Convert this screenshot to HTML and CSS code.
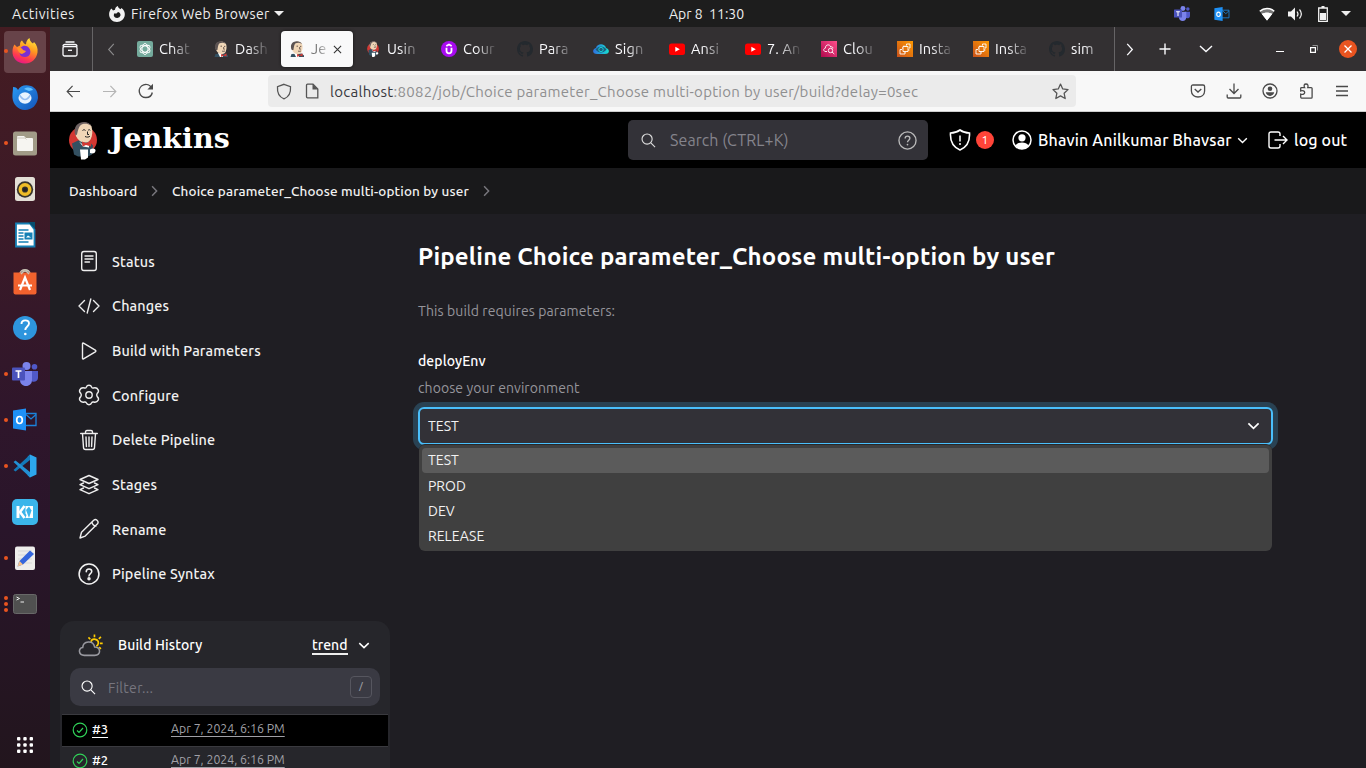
FILE: index.html
```html
<!DOCTYPE html>
<html lang="en">
<head>
<meta charset="utf-8">
<title>Jenkins</title>
<link rel="stylesheet" href="styles.css">
</head>
<body>
<svg class="defs" aria-hidden="true">
  <defs>
    <linearGradient id="ffg" x1=".7" y1="0" x2=".3" y2="1"><stop offset="0" stop-color="#ffe63c"/><stop offset=".4" stop-color="#ff9a1f"/><stop offset=".75" stop-color="#ff3b4e"/><stop offset="1" stop-color="#e4168b"/></linearGradient>
    <linearGradient id="tbg" x1="0" y1="0" x2="1" y2="1"><stop offset="0" stop-color="#2a9af3"/><stop offset="1" stop-color="#1453b8"/></linearGradient>
    <linearGradient id="awsg" x1="0" y1="1" x2="1" y2="0"><stop offset="0" stop-color="#c8511b"/><stop offset="1" stop-color="#f90"/></linearGradient>
    <linearGradient id="cwg" x1="0" y1="1" x2="1" y2="0"><stop offset="0" stop-color="#b0084d"/><stop offset="1" stop-color="#ff4f8b"/></linearGradient>
    <linearGradient id="eyeg"><stop offset="0" stop-color="#2f6fe0"/><stop offset="1" stop-color="#16e0d0"/></linearGradient>
  </defs>
  <symbol id="head" viewBox="0 0 16 16"><path d="M1.500 16l1-3 10-.5 2.500 2V16z" fill="#335061"/><path d="M5 12l3-1 2 5H7z" fill="#fff"/><path d="M3.500 2.500C6-.3 11.500-.3 13 3c.8 2 .8 5-.2 7.500-1 2.800-5 3.300-7 1.800C4 11 3 9 2.500 7z" fill="#f0d6b7"/><path d="M2.800 9C1.200 6 1.800 2.500 4.600 1 8-.6 11.500.3 13 3c-2.400-1.700-4.600-1.500-6.400-.8C5.200 3.500 5 5.500 4.400 9z" fill="#5c5353"/><path d="M7.500 5.200H9M11 5.400h1.300M9 10c1 .5 2.200.4 3-.1M10.700 6v2.200h1" stroke="#4b3a36" stroke-width=".8" fill="none"/><path d="M8 13l2.600 1 2.900-1.700v3.300L10.600 14.500 8.200 16z" fill="#d33833"/></symbol>
  <symbol id="butler" viewBox="0 0 28 38"><ellipse cx="14" cy="18.500" rx="14" ry="13.500" fill="#d33833"/><path d="M5 33L3 22l6-3 10 0 5 5-1 9-4 2H9z" fill="#335061"/><path d="M10 20l5 4 5-4v6l-6-1z" fill="#fff"/><path d="M7 6C10 .5 20-.5 22.500 5c1.500 5 .8 9-.7 12.500-2 4.500-8 4.500-11.500 1.500C7.500 16.500 6 13 6 10z" fill="#f0d6b7"/><path d="M6.500 14C4.500 9 6 3.500 10.500 1.500 15-.5 20 .3 22.300 4.500c-4-3-8-2.500-10.500-1C9.500 5.500 9 9 8 13z" fill="#6e6262"/><path d="M13.500 9c1-1 2-1 3 0M19 9c.8-1 1.600-1 2.300-.2M16 15c2 1 4 .7 5-.4M18.500 10v3h1.500" stroke="#222" fill="none"/><path d="M13 20l4 1.500 5-2v5.500L17 23.500 13.500 25z" fill="#d33833"/><path d="M11 28h8v8l-3 2h-4z" fill="#fff"/><path d="M21 28c3-2 6-1 5.500 1.500s-3 3-5.500 2z" fill="#fff"/></symbol>
  <symbol id="yt" viewBox="0 0 16 16"><rect y="2.500" width="16" height="11.500" rx="2.500" fill="red"/><path d="M6.300 5.800l4.500 2.500-4.500 2.500z" fill="#fff"/></symbol>
  <symbol id="gh" viewBox="0 0 16 16"><path fill="#24292e" d="M8 0C3.580 0 0 3.580 0 8c0 3.540 2.290 6.530 5.470 7.590.4.070.55-.17.55-.38 0-.19-.01-.82-.01-1.490-2.010.37-2.530-.49-2.690-.94-.09-.23-.48-.94-.82-1.130-.28-.15-.68-.52-.01-.53.63-.01 1.080.58 1.230.82.72 1.210 1.870.87 2.330.66.07-.52.28-.87.51-1.070-1.780-.2-3.640-.89-3.640-3.950 0-.87.31-1.590.82-2.150-.08-.2-.36-1.020.08-2.120 0 0 .67-.21 2.200.82.64-.18 1.320-.27 2-.27s1.360.09 2 .27c1.530-1.040 2.200-.82 2.200-.82.44 1.100.16 1.920.08 2.120.51.56.82 1.270.82 2.150 0 3.070-1.870 3.750-3.650 3.950.29.25.54.73.54 1.480 0 1.070-.01 1.930-.01 2.200 0 .21.15.46.55.38A8.010 8.010 0 0016 8c0-4.420-3.580-8-8-8z"/></symbol>
  <symbol id="aws" viewBox="0 0 16 16"><path fill="url(#awsg)" d="M0 0h16v16H0z"/><path fill="none" stroke="#fff" stroke-width=".9" d="M6 5.500h5v5H6zM5 8.500H3v4.500h5v-1.500M9.500 4.500V3H13v4h-1M7 4.500v1M9 4.500v1M11 9h1.500M5 7h1M8 10.500V12"/></symbol>
  <symbol id="teams" viewBox="0 0 26 24"><circle cx="14.500" cy="4" r="4" fill="#7b83eb"/><circle cx="22.500" cy="4.700" r="2.800" fill="#5059c9"/><path d="M18 9h8v7c0 3.500-5 5-7 2.500z" fill="#5059c9"/><path d="M8 9h12v9c0 3.500-2.500 6-6 6s-6-2.500-6-6z" fill="#7b83eb"/><rect y="5.500" width="13" height="13" rx="1" fill="#4b53bc"/><path d="M3.500 9h6M6.500 9v7" stroke="#fff" stroke-width="1.700"/></symbol>
  <symbol id="outlook" viewBox="0 0 24 22"><path d="M12 5h11v12H12" fill="none" stroke="#1b83dc" stroke-width="1.300"/><path d="M13 6l5 4.500L23 6" fill="none" stroke="#1b83dc" stroke-width="1.300"/><path d="M0 2l13-2v22L0 20z" fill="#1e90f5"/><ellipse cx="6.500" cy="11.500" rx="2.800" ry="3.500" fill="none" stroke="#fff" stroke-width="1.700"/></symbol>
  <symbol id="help" viewBox="0 0 20 20"><g fill="none" stroke="currentColor" stroke-width="1.400"><circle cx="10" cy="10" r="9"/><path d="M7.500 8c0-3.600 5-3.300 5-.3 0 1.900-2.500 2-2.500 4.100"/></g><circle cx="10" cy="14.300" r=".9" fill="currentColor"/></symbol>
  <symbol id="mag" viewBox="0 0 16 16"><g fill="none" stroke="currentColor" stroke-width="1.200"><circle cx="6.500" cy="6.500" r="5.400"/><path d="M10.500 10.500L15 15"/></g></symbol>
  <symbol id="down" viewBox="0 0 14 8"><path d="M1.500 1.200L7 6.500l5.500-5.300" fill="none" stroke="currentColor" stroke-width="1.800"/></symbol>
  <symbol id="right" viewBox="0 0 8 14"><path d="M1.200 1.500L6.500 7l-5.300 5.500" fill="none" stroke="currentColor" stroke-width="1.700"/></symbol>
  <symbol id="ok" viewBox="0 0 16 16"><g fill="none" stroke="#30d158" stroke-width="1.200"><circle cx="8" cy="8" r="6.800"/><path d="M5 8.500l2 2 4-4.500"/></g></symbol>
</svg>

<header class="panel">
  <span class="activities">Activities</span>
  <svg class="app-ff" viewBox="0 0 16 16"><path d="M2.500 2.500L4 4.500 6 3.800c0-2 1.500-3.300 3-3.800-.2 1.500 1 2.200 2.500 3.200l1-1.200C15 4 16 6 15.800 9c-.4 4-3.800 7-7.800 7-4.500 0-8-3.500-7.900-8 0-2 1-4.500 2.400-5.500z" fill="#f2f2f2"/><path d="M5 7.500h2.500L9 6c2 .5 2.800 2 2.500 3.500A3.600 3.600 0 014.800 10z" fill="#1d1d1d"/></svg>
  <span class="app-name">Firefox Web Browser</span><i class="tri"></i>
  <span class="clock">Apr 8&nbsp; 11:30</span>
  <div class="tray">
    <svg class="t-teams"><use href="#teams"/></svg>
    <svg class="t-out"><use href="#outlook"/></svg>
    <svg class="t-wifi" viewBox="0 0 16 14"><path d="M8 13.500L.5 4C4.500.2 11.500.2 15.500 4z" fill="#777"/><path d="M8 13.500L3 7c3-2 7-2 10 0z" fill="#fff"/><path d="M2.500 6.500h11L8 13.500z" fill="#fff"/><path d="M.8 4.200C4.800.6 11.200.6 15.200 4.200" fill="none" stroke="#fff" stroke-width="1.500"/></svg>
    <svg class="t-vol" viewBox="0 0 16 14"><path d="M0 4.500h3L7 .5v13l-4-4H0z" fill="#f2f2f2"/><path d="M9 4.500c1.200 1.500 1.200 3.500 0 5M11.500 2.500c2.300 2.800 2.300 6.200 0 9" fill="none" stroke="#f2f2f2" stroke-width="1.200"/></svg>
    <svg class="t-bat" viewBox="0 0 10 16"><path d="M3.500 0h3v2h-3z" fill="#f2f2f2"/><path d="M.7 2h8.600v13.300H.7z" fill="none" stroke="#f2f2f2" stroke-width="1.300"/><path d="M2 7h6v7H2z" fill="#f2f2f2"/></svg>
    <i class="tri"></i>
  </div>
</header>

<div class="desktop">
<aside class="dock">
  <div class="app on"><i class="dots d1"></i><svg viewBox="0 0 26 26"><path d="M2.500 6.500L5 9l3-1.500c-.2-3 1-4.500 2-5l2 3 2 1C14 4 15 1.500 17.500 0c.3 3 1.500 4 3.500 5.500L22 4c3 3 4 6.500 3.500 10.500C24.500 21 19.500 25.500 13 25.500 5.500 25.500 0 20 .5 13 .6 10 1.500 8 2.500 6.500z" fill="url(#ffg)"/><path d="M8 12c0-4 6-6 9-2s1 9-4 9-6-3-5-7z" fill="#7a2fd0"/><path d="M5 10c3-1 5 0 6 2l3 1c-1 2-3 2-4 3-2 0-4-3-5-6z" fill="#ff9328"/></svg></div>
  <div class="app"><svg viewBox="0 0 26 26"><path d="M1 3c3 0 4 1 5 3 2-4 7-6 13-4 5 2 7 6 7 12-1 7-6 12-13 12C6 26 1 20 .5 14 .3 9 1 7 1 3z" fill="url(#tbg)"/><path d="M12 5c4-3 8-1 9 1l-4 1z" fill="#65c3ff"/><ellipse cx="13" cy="14" rx="6.500" ry="5.800" fill="#e9f3ff"/><path d="M7.500 11c2.500 4 4 4.500 5.500 4.500s3-.5 5.500-4.500" fill="none" stroke="#97bdf0" stroke-width="1.500"/></svg></div>
  <div class="app"><i class="dots d1"></i><svg viewBox="0 0 26 26"><rect x="1" y="1.500" width="24" height="24" rx="2.500" fill="#a19b87"/><path d="M5 7q0-1 1-1h6l2 2h6q1 0 1 1v11q0 1-1 1H6q-1 0-1-1z" fill="#f6f5f1"/><path d="M5 8h8l1.500 1.500" fill="none" stroke="#d0ccc0"/></svg></div>
  <div class="app"><svg viewBox="0 0 26 26"><rect x="3" y="1" width="20" height="24" rx="2.500" fill="#e3dfd6"/><circle cx="13" cy="13.500" r="8.200" fill="#38352c"/><circle cx="13" cy="13.500" r="4.800" fill="none" stroke="#efbd27" stroke-width="3.400"/><circle cx="13" cy="13.500" r="2" fill="#222"/></svg></div>
  <div class="app"><svg viewBox="0 0 26 26"><path d="M4 1.500h14l4.500 6v17H4z" fill="#fff" stroke="#1580b5" stroke-width="1.800"/><path d="M16 0h7v7z" fill="#074d6d"/><path d="M6.500 8h10M6.500 11h5M6.500 14h5M6.500 17h5M6.500 20h10" stroke="#1580b5" stroke-width="1.400"/><path d="M12.500 10.500h8v7h-8z" fill="#1580b5"/><path d="M14 15.500l2-2 3 2z" fill="#fff"/></svg></div>
  <div class="app"><svg viewBox="0 0 26 26"><path d="M8 5c0-5.500 10-5.500 10 0" fill="none" stroke="#c8c3b5" stroke-width="1.600"/><path d="M1.500 3.500h23v20q0 2-2 2h-19q-2 0-2-2z" fill="#f2622e"/><path d="M9 5q4-6 8 0" fill="none" stroke="#c8c3b5" stroke-width="1.500"/><path d="M8 21L13 8.500 18 21M6 16.500h14" fill="none" stroke="#fff" stroke-width="2.200"/></svg></div>
  <div class="app"><svg viewBox="0 0 26 26"><circle cx="13" cy="13" r="12" fill="#2e95dd"/><path d="M9.500 9c0-5 7.500-4.500 7.500-.5 0 3-3.700 3-3.700 6.500" fill="none" stroke="#fff" stroke-width="1.900"/><circle cx="13.300" cy="19" r="1.300" fill="#fff"/></svg></div>
  <div class="app"><i class="dots d1"></i><svg class="wide"><use href="#teams"/></svg></div>
  <div class="app"><i class="dots d1"></i><svg class="ol"><use href="#outlook"/></svg></div>
  <div class="app"><i class="dots d1"></i><svg viewBox="0 0 26 26"><path d="M18 1.500L15.500 4 18 7v12l-2.500 3 2.500 2.500 6.500-3V4.500z" fill="#2da7ee"/><path d="M18 7L3.500 18.500 1.500 17 15 4.500l3-3z" fill="#1379b9"/><path d="M18 19L3.500 7.500 1.500 9 15 21.500l3 3z" fill="#2290d4"/></svg></div>
  <div class="app"><svg viewBox="0 0 26 26"><rect width="26" height="26" rx="5" fill="#3bb5ea"/><path d="M4.500 7h3v12h-3z" fill="#fff"/><path d="M12.500 7L8 13l4.500 6" fill="none" stroke="#fff" stroke-width="2.600"/><path d="M13.500 7h7.500v12h-7.500l1-3-1-1.500z" fill="#fff"/><path d="M17 19l-3-8 3-3.500 2.500 4z" fill="#3bb5ea"/></svg></div>
  <div class="app"><i class="dots d1"></i><svg viewBox="0 0 26 26"><rect x="3" y="1.500" width="20" height="23.500" rx="2" fill="#eeedeb"/><path d="M6 6h14M6 10h14M6 14h14M6 18h14" stroke="#d7d7d7"/><path d="M5.500 21.500l2-5.500L18 5.500 22 9 11 19.500z" fill="#3465dc"/><path d="M5.500 21.500l2-5.500 3.500 3.500z" fill="#f4c28d"/></svg></div>
  <div class="app"><i class="dots d3"></i><svg viewBox="0 0 26 26"><rect x="1.500" y="3.500" width="23" height="19" rx="2" fill="#505050" stroke="#686868"/><path d="M4.500 6l3 1.500-3 1.500M8.500 11h3.500" fill="none" stroke="#eee"/></svg></div>
  <svg class="grid9" viewBox="0 0 16 16" fill="#fff"><rect width="3.400" height="3.400" rx="1"/><rect x="6.300" width="3.400" height="3.400" rx="1"/><rect x="12.600" width="3.400" height="3.400" rx="1"/><rect y="6.300" width="3.400" height="3.400" rx="1"/><rect x="6.300" y="6.300" width="3.400" height="3.400" rx="1"/><rect x="12.600" y="6.300" width="3.400" height="3.400" rx="1"/><rect y="12.600" width="3.400" height="3.400" rx="1"/><rect x="6.300" y="12.600" width="3.400" height="3.400" rx="1"/><rect x="12.600" y="12.600" width="3.400" height="3.400" rx="1"/></svg>
</aside>

<section class="browser">
  <div class="tabbar">
    <div class="fxview"><svg viewBox="0 0 16 16" fill="none" stroke="#fbfbfe" stroke-width="1.300"><path d="M3.500 1h9M1 5.500q0-2.200 2-2.200h10q2 0 2 2.200"/><rect x="1" y="5.500" width="14" height="9.500" rx="1.500"/><path d="M6 9.300h4"/></svg></div>
    <div class="scroll-l"><svg viewBox="0 0 8 14"><path d="M7 1L1.500 7 7 13" fill="none" stroke="#8c8b8c" stroke-width="1.200"/></svg></div>
    <div class="tabs">
      <div class="tab"><svg viewBox="0 0 16 16"><rect width="16" height="16" rx="2" fill="#74aa9c"/><g fill="none" stroke="#fff" stroke-width=".9"><ellipse cx="8" cy="8" rx="3" ry="5.500"/><ellipse cx="8" cy="8" rx="3" ry="5.500" transform="rotate(60 8 8)"/><ellipse cx="8" cy="8" rx="3" ry="5.500" transform="rotate(120 8 8)"/></g></svg><span>Chat</span></div>
      <div class="tab"><svg><use href="#head"/></svg><span>Dash</span></div>
      <div class="tab active"><svg><use href="#head"/></svg><span>Je</span><svg class="x" viewBox="0 0 10 10"><path d="M1 1l8 8M9 1L1 9" stroke="#333" stroke-width="1.200"/></svg></div>
      <div class="tab"><svg><use href="#butler"/></svg><span>Usin</span></div>
      <div class="tab"><svg viewBox="0 0 16 16"><circle cx="8" cy="8" r="8" fill="#a80bf0"/><path d="M5.500 6.800v3c0 3.300 5 3.300 5 0v-3M5.300 5L8 3.500 10.700 5" fill="none" stroke="#fff" stroke-width="1.800"/></svg><span>Cour</span></div>
      <div class="tab"><svg><use href="#gh"/></svg><span>Para</span></div>
      <div class="tab"><svg viewBox="0 0 16 16"><path d="M4 13C-1 13-1 8 3 7c1-5 9-5 10 0 4 1 4 6-1 6z" fill="url(#eyeg)"/><path d="M2.500 8.500c3-4 8-4 11 0-3 4-8 4-11 0z" fill="#1b5e80"/><circle cx="8" cy="8.500" r="2.200" fill="none" stroke="#17d0d0"/></svg><span>Sign</span></div>
      <div class="tab"><svg><use href="#yt"/></svg><span>Ansi</span></div>
      <div class="tab"><svg><use href="#yt"/></svg><span>7. An</span></div>
      <div class="tab"><svg viewBox="0 0 16 16"><path fill="url(#cwg)" d="M0 0h16v16H0z"/><g fill="none" stroke="#fff" stroke-width=".9"><path d="M6 10.500H4c-2-1-1.500-3 .3-3.300C4.500 3 9 3 9.800 6c1.500-.6 2.200.3 2 1.500"/><circle cx="9.500" cy="9.500" r="2.200"/><path d="M11 11l2.300 2"/></g></svg><span>Clou</span></div>
      <div class="tab"><svg><use href="#aws"/></svg><span>Insta</span></div>
      <div class="tab"><svg><use href="#aws"/></svg><span>Insta</span></div>
      <div class="tab"><svg><use href="#gh"/></svg><span>sim</span></div>
    </div>
    <div class="tabend">
      <svg class="e1" viewBox="0 0 8 14"><path d="M1 1l5.500 6L1 13" fill="none" stroke="#fbfbfe" stroke-width="1.400"/></svg>
      <svg class="e2" viewBox="0 0 12 12"><path d="M6 .5v11M.5 6h11" stroke="#fbfbfe" stroke-width="1.400"/></svg>
      <svg class="e3" viewBox="0 0 14 8"><path d="M1 1l6 5.500L13 1" fill="none" stroke="#fbfbfe" stroke-width="1.400"/></svg>
      <svg class="e4" viewBox="0 0 8 8"><path d="M0 6.500h8" stroke="#fff"/></svg>
      <svg class="e5" viewBox="0 0 8 8"><path d="M.6 2.600h4.800v4.800H.6z" fill="none" stroke="#fff" stroke-width="1.200"/><path d="M2.500.5h5v5" fill="none" stroke="#aaa" stroke-width=".8"/></svg>
      <svg class="e6" viewBox="0 0 18 18"><circle cx="9" cy="9" r="9" fill="#e95420"/><path d="M5.500 5.500l7 7M12.500 5.500l-7 7" stroke="#fff" stroke-width="1.300"/></svg>
    </div>
  </div>

  <div class="navbar">
    <svg class="n-back" viewBox="0 0 16 14"><path d="M15 7H1.500M7 1L1.200 7 7 13" fill="none" stroke="#4a4a4a" stroke-width="1.300"/></svg>
    <svg class="n-fwd" viewBox="0 0 16 14"><path d="M1 7h13.500M9 1l5.800 6L9 13" fill="none" stroke="#b5b5b5" stroke-width="1.300"/></svg>
    <svg class="n-rel" viewBox="0 0 16 16"><path d="M13.500 5A6.500 6.500 0 108 14.500c3.200 0 5.700-2 6.300-5" fill="none" stroke="#4a4a4a" stroke-width="1.400"/><path d="M15 .8v5.600H9.400z" fill="#4a4a4a"/></svg>
    <div class="url">
      <svg class="u1" viewBox="0 0 16 16"><path d="M8 .8l6.500 2.300c.5 6.500-2 10.500-6.500 12.200C3.500 13.600 1 9.600 1.500 3.100z" fill="none" stroke="#555" stroke-width="1.300"/></svg>
      <svg class="u2" viewBox="0 0 14 16"><path d="M2.500 1.200H8L12.800 6v8.800H2.500q-1 0-1-1V2.200q0-1 1-1z" fill="none" stroke="#555" stroke-width="1.300"/><path d="M7.500 1v5.500H13z" fill="#555"/></svg>
      <span class="addr"><b>localhost</b>:8082/job/Choice parameter_Choose multi-option by user/build?delay=0sec</span>
      <svg class="u3" viewBox="0 0 16 16"><path d="M8 1l2.100 4.600 5 .6-3.700 3.400 1 5L8 12.100l-4.400 2.500 1-5L.9 6.200l5-.6z" fill="none" stroke="#555" stroke-width="1.200" stroke-linejoin="round"/></svg>
    </div>
    <div class="navtools">
      <svg viewBox="0 0 16 16" fill="none" stroke="#4a4a4a" stroke-width="1.300"><path d="M3 2h10q1.600 0 1.600 1.600V8c0 8-13.200 8-13.200 0V3.600Q1.400 2 3 2z"/><path d="M4.700 6L8 9l3.300-3"/></svg>
      <svg viewBox="0 0 16 16" fill="none" stroke="#4a4a4a" stroke-width="1.300"><path d="M8 .5v10M3.500 6L8 10.500 12.500 6M1.200 11.500V14q0 1 1 1h11.600q1 0 1-1v-2.500"/></svg>
      <svg viewBox="0 0 16 16"><circle cx="8" cy="8" r="7" fill="none" stroke="#4a4a4a" stroke-width="1.300"/><circle cx="8" cy="5.700" r="2.300" fill="#4a4a4a"/><path d="M3.800 9.300h8.400c-.3 2-2 3.600-4.200 3.600s-3.900-1.600-4.200-3.600z" fill="#4a4a4a"/></svg>
      <svg viewBox="0 0 16 16"><path d="M4.500 15.200q-1.800 0-1.800-1.200v-2.800c2.500.8 4-.4 4-1.700 0-1.500-1.800-2.200-4-1.500V5.500q0-.8.800-.8h3.200C5.500 2.500 6.200 1 8 1s2.600 1.500 1.700 3.700h3.500q.9 0 .9.900v8.700q0 .9-.9.900z" fill="none" stroke="#4a4a4a" stroke-width="1.300"/></svg>
      <svg viewBox="0 0 16 16"><path d="M2 3.500h12M2 8h12M2 12.500h12" stroke="#4a4a4a" stroke-width="1.300"/></svg>
    </div>
  </div>

  <div class="jhead">
    <svg class="logo"><use href="#butler"/></svg>
    <span class="word">Jenkins</span>
    <div class="search"><svg class="s1"><use href="#mag"/></svg><span>Search (CTRL+K)</span><svg class="s2"><use href="#help"/></svg></div>
    <svg class="shield" viewBox="0 0 22 22"><path d="M11 1c3 2.200 6 3 9.500 3 .5 8-2.500 14-9.500 17C4 18 1 12 1.500 4 5 4 8 3.200 11 1z" fill="none" stroke="#fff" stroke-width="1.600"/><path d="M11 6.500v6" stroke="#fff" stroke-width="1.500"/><circle cx="11" cy="15" r="1" fill="#fff"/></svg>
    <span class="badge">1</span>
    <svg class="person" viewBox="0 0 20 20"><circle cx="10" cy="10" r="9" fill="none" stroke="#fff" stroke-width="1.500"/><circle cx="10" cy="7.800" r="3.600" fill="#fff"/><path d="M3.500 15.500c2-4 11-4 13 0-3 4.500-10 4.500-13 0z" fill="#fff"/></svg>
    <span class="user">Bhavin Anilkumar Bhavsar</span>
    <svg class="udown"><use href="#down"/></svg>
    <svg class="exit" viewBox="0 0 20 18"><path d="M12 5V3q0-2-2-2H3Q1 1 1 3v12q0 2 2 2h7q2 0 2-2v-2M6.500 9h12M15 5l4 4-4 4" fill="none" stroke="#fff" stroke-width="1.400"/></svg>
    <span class="logout">log out</span>
  </div>

  <nav class="crumbs"><span class="c1">Dashboard</span><svg><use href="#right"/></svg><span class="c2">Choice parameter_Choose multi-option by user</span><svg><use href="#right"/></svg></nav>

  <div class="page">
    <div class="side">
      <div class="tasks">
        <a><svg viewBox="0 0 22 22"><rect x="3.700" y="1.500" width="14.600" height="19" rx="2.200"/><path d="M7 6h8M7 9h8M7 12h4.500"/></svg><span>Status</span></a>
        <a><svg viewBox="0 0 22 22"><path d="M6.500 5.500L1 11l5.500 5.500M15.500 5.500L21 11l-5.500 5.500M12.800 4l-3.600 14"/></svg><span>Changes</span></a>
        <a><svg viewBox="0 0 22 22"><path d="M4.500 3.800v14.400q0 1.200 1 .6l11.800-7q1.200-.8 0-1.600l-11.800-7q-1-.6-1 .6z"/></svg><span>Build with Parameters</span></a>
        <a><svg viewBox="0 0 22 22"><circle cx="11" cy="11" r="3.200"/><path d="M8.300 3.200Q9 1.300 11 1.300t2.700 1.900q.5 1.100 1.900.8 3.200-.8 4.600 1.900.9 2-1 3.500-1 1.500 0 3.200 1.900 1.500 1 3.500-1.400 2.700-4.600 1.900-1.400-.3-1.900.8-.7 1.900-2.700 1.900t-2.700-1.900q-.5-1.100-1.900-.8-3.200.8-4.600-1.900-.9-2 1-3.500 1-1.700 0-3.200-1.900-1.500-1-3.500Q3.200 3.200 6.400 4q1.400.3 1.900-.8z"/></svg><span>Configure</span></a>
        <a><svg viewBox="0 0 22 22"><path d="M2.700 4.500h16.600M7.500 4.500V3q0-1.500 1.500-1.500h4Q14.500 1.500 14.500 3v1.500M4.500 4.500l1 14q.1 2 2 2h7q1.900 0 2-2l1-14M8 8l.4 9.500M11 8v9.500M14 8l-.4 9.500"/></svg><span>Delete Pipeline</span></a>
        <a><svg viewBox="0 0 22 22"><path d="M11 1.500l9 4-9 4-9-4zM5.500 9L2 10.700l9 4 9-4L16.500 9M5.500 14L2 15.700l9 4 9-4-3.500-1.700"/></svg><span>Stages</span></a>
        <a><svg viewBox="0 0 22 22"><path d="M2 20l1.500-5.700L15.700 2.200q1.700-1.400 3.300 0 1.900 1.700.5 3.500L7.200 18.100zM14 4q.3 3.500 4 4"/></svg><span>Rename</span></a>
        <a><svg><use href="#help"/></svg><span>Pipeline Syntax</span></a>
      </div>
      <div class="history">
        <div class="hhead">
          <svg class="sun" viewBox="0 0 24 22"><g fill="none" stroke="#fc0" stroke-width="1.600"><path d="M12.500 7.500c1-4 7.500-3 7 1.500-.2 1.500-1 2.200-2 2.500M15.800 3V.5M20 4.700l2-2M21 9h2.700M20.300 12.500l1.700 1.700M11.800 5l-1.800-1.800"/></g><path d="M6 20.500C.5 20.500-.2 13.500 4.500 13 5 6.500 14.500 5.500 16 12.500c6 .2 6.500 8 0 8z" fill="#26262b" stroke="#98989f" stroke-width="1.500"/></svg>
          <span class="ht">Build History</span><span class="trend">trend</span><svg class="hd"><use href="#down"/></svg>
        </div>
        <div class="filter"><svg><use href="#mag"/></svg><span>Filter...</span><kbd>/</kbd></div>
        <div class="build first"><svg><use href="#ok"/></svg><b>#3</b><u>Apr 7, 2024, 6:16 PM</u></div>
        <div class="build"><svg><use href="#ok"/></svg><b>#2</b><u>Apr 7, 2024, 6:16 PM</u></div>
      </div>
    </div>
    <main class="main">
      <h1>Pipeline Choice parameter_Choose multi-option by user</h1>
      <p class="req">This build requires parameters:</p>
      <div class="label">deployEnv</div>
      <p class="desc">choose your environment</p>
      <div class="select"><span>TEST</span><svg><use href="#down"/></svg>
        <div class="menu"><div class="opt sel">TEST</div><div class="opt">PROD</div><div class="opt">DEV</div><div class="opt">RELEASE</div></div>
      </div>
    </main>
  </div>
</section>
</div>
</body>
</html>
```
FILE: styles.css
```css
* { box-sizing: border-box; }
html { overflow: hidden; }
body { margin: 0; width: 1366px; height: 768px; overflow: hidden; background: #1f1e23; color: #fff; font-family: "Ubuntu", "Noto Sans", sans-serif; font-size: 14px; white-space: nowrap; }
svg { display: block; flex: none; }
span { flex: none; }
.defs { position: absolute; width: 0; height: 0; }

.panel { height: 27px; background: #1d1d1d; display: flex; align-items: center; color: #eee; font-size: 14px; }
.activities { margin-left: 12px; width: 97px; letter-spacing: .55px; }
.app-ff { width: 16px; height: 16px; margin-right: 6px; }
.app-name { width: 138px; letter-spacing: .37px; }
.tri { border: 5px solid transparent; border-top-color: #eee; border-bottom: 0; margin-left: 5px; }
.clock { margin-left: 385px; }
.tray { margin-left: auto; display: flex; align-items: center; padding-right: 15px; }
.t-teams { width: 16px; height: 15px; margin-right: 24px; }
.t-out { width: 16px; height: 14px; margin-right: 29px; }
.t-wifi { width: 16px; height: 14px; margin-right: 13px; }
.t-vol { width: 16px; height: 14px; margin-right: 14px; }
.t-bat { width: 10px; height: 16px; margin-right: 8px; }

.desktop { display: flex; height: 741px; }
.dock { width: 50px; padding-top: 1px; background: linear-gradient(#451c22, #3c1a27 25%, #2f162b 52%, #29152a 68%, #22151d); display: flex; flex-direction: column; flex: none; }
.app { height: 46.100px; display: flex; align-items: center; justify-content: center; position: relative; flex: none; }
.app svg { width: 26px; height: 26px; position: relative; }
.app svg.wide { height: 24px; }
.app svg.ol { width: 24px; height: 23px; }
.app.on::before { content: ""; position: absolute; left: 4px; top: 3px; width: 42px; height: 42px; border-radius: 4px; background: #674349; }
.dots { position: absolute; left: 4px; width: 4px; height: 4px; border-radius: 50%; background: #e95420; }
.d3 { box-shadow: 0 -6px #e95420, 0 6px #e95420; }
.grid9 { width: 16px; height: 16px; margin: auto 17px 15px; }

.browser { flex: 1; min-width: 0; }
.tabbar { height: 44px; background: #333032; display: flex; }
.fxview { width: 43px; border-right: 1px solid #666466; display: flex; align-items: center; justify-content: center; padding-right: 2px; }
.fxview svg { width: 16px; height: 16px; }
.scroll-l { width: 36px; display: flex; align-items: center; justify-content: center; }
.scroll-l svg { width: 8px; height: 13px; }
.tabs { width: 985px; display: flex; overflow: hidden; padding-top: 4px; flex: none; }
.tab { width: 72px; height: 36px; margin-right: 4px; padding-left: 8px; display: flex; align-items: center; flex: none; color: #fbfbfe; }
.tab svg { width: 16px; height: 16px; margin-right: 6px; }
.tab span { width: 35px; line-height: 24px; font-size: 14.500px; letter-spacing: .15px; -webkit-mask-image: linear-gradient(90deg, #000 35%, transparent); mask-image: linear-gradient(90deg, #000 35%, transparent); }
.tab.active { background: #f9f9fa; border-radius: 4px; color: #777; box-shadow: 0 0 3px #111; }
.tab.active span { width: 20px; }
.tab.active svg.x { width: 9px; height: 9px; margin: 0 0 0 2px; }
.tabend { border-left: 1px solid #666466; flex: 1; display: flex; align-items: center; }
.e1 { width: 8px; height: 13px; margin-left: 11px; }
.e2 { width: 12px; height: 12px; margin-left: 25px; }
.e3 { width: 14px; height: 8px; margin-left: 28px; }
.e4 { width: 8px; height: 8px; margin-left: 63px; }
.e5 { width: 8px; height: 8px; margin-left: 26px; }
.e6 { width: 18px; height: 18px; margin-left: 21px; }

.navbar { height: 41px; background: #f8f8f8; border-bottom: 1px solid #ccc; display: flex; align-items: center; }
.n-back { width: 15px; height: 13px; margin-left: 16px; }
.n-fwd { width: 15px; height: 13px; margin-left: 21px; }
.n-rel { width: 16px; height: 16px; margin-left: 21px; }
.url { width: 808px; height: 32px; margin-left: 114px; border-radius: 4px; background: #ebebeb; display: flex; align-items: center; }
.u1 { width: 16px; height: 17px; margin-left: 8px; }
.u2 { width: 14px; height: 16px; margin-left: 13px; }
.addr { margin-left: 11px; font-size: 15px; letter-spacing: .28px; color: #8f8f90; width: 722px; }
.addr b { font-weight: 400; color: #38383d; }
.u3 { width: 17px; height: 17px; }
.navtools { display: flex; margin-left: 114px; gap: 20px; }
.navtools svg { width: 16px; height: 16px; }

.jhead { height: 56px; background: #000; display: flex; align-items: center; }
.logo { width: 28px; height: 39px; margin-left: 19px; }
.word { font: bold 28.500px "DejaVu Serif", serif; margin-left: 13px; width: 518px; padding-bottom: 4px; }
.search { width: 300px; height: 40px; border-radius: 5px; background: #333238; display: flex; align-items: center; color: #85848c; font-size: 16px; }
.s1 { width: 15px; height: 15px; margin: 0 14px 0 13px; color: #ddd; }
.search span { width: 228px; letter-spacing: .08px; }
.s2 { width: 19px; height: 19px; color: #bbb; }
.shield { width: 22px; height: 22px; margin-left: 21px; }
.badge { width: 18px; height: 18px; border-radius: 50%; background: #ff4438; font-size: 12px; line-height: 18px; text-align: center; margin-left: 5px; }
.person { width: 20px; height: 20px; margin-left: 18px; }
.user { width: 194px; margin-left: 6px; font-size: 16px; letter-spacing: .17px; font-weight: 500; }
.udown { width: 11px; height: 7px; margin-left: 5px; }
.exit { width: 20px; height: 18px; margin-left: 20px; }
.logout { margin-left: 6px; font-size: 16px; letter-spacing: .15px; font-weight: 500; }

.crumbs { height: 46px; background: #19191b; display: flex; align-items: center; padding-left: 19px; font-size: 13.500px; letter-spacing: .15px; font-weight: 500; color: #f2f2f2; }
.crumbs svg { width: 7px; height: 12px; color: #78777d; margin: 0 14px; }
.c1 { width: 68px; }
.c2 { width: 297px; }

.page { display: flex; height: 554px; overflow: hidden; }
.side { width: 340px; padding: 25px 0 0 10px; flex: none; }
.tasks { display: flex; flex-direction: column; height: 382px; color: #f2f2f2; }
.tasks a { height: 44.650px; display: flex; align-items: center; padding-left: 18px; font-size: 14.400px; letter-spacing: .15px; font-weight: 500; flex: none; }
.tasks svg { width: 22px; height: 22px; margin-right: 12px; fill: none; stroke: #eee; stroke-width: 1.400; stroke-linejoin: round; stroke-linecap: round; }
.tasks span { padding-top: 1px; }
.history { width: 330px; height: 147px; overflow: hidden; background: #26262b; border-radius: 14px 14px 0 0; padding: 0 2px; }
.hhead { height: 47px; display: flex; align-items: center; font-weight: 500; padding: 1px 0 0 16px; }
.sun { width: 25px; height: 23px; }
.ht { margin-left: 15px; width: 194px; letter-spacing: .12px; }
.trend { width: 36px; border-bottom: 2px solid #eee; line-height: 16px; margin-top: 1px; }
.hd { width: 12px; height: 7px; margin-left: 10px; }
.filter { height: 38px; margin: 0 8px 8px; border-radius: 10px; background: #3a3a43; display: flex; align-items: center; padding: 0 8px 0 11px; color: #77767f; }
.filter svg { width: 15px; height: 15px; color: #fff; margin-right: 12px; }
.filter span { letter-spacing: .3px; padding-top: 1px; }
.filter kbd { margin-left: auto; width: 22px; height: 22px; border: 1px solid #56565f; border-radius: 4px; text-align: center; font: 12px/20px "Noto Sans", sans-serif; color: #98989f; }
.build { height: 31px; border-top: 1px solid #3a3a3f; display: flex; align-items: center; padding-left: 10px; font-size: 12.300px; padding-bottom: 4px; line-height: 22px; }
.build.first { background: #000; height: 32px; }
.build svg { width: 16px; height: 16px; margin: 2px 4px 0 0; }
.build b { width: 79px; font-size: 13px; font-weight: 500; text-decoration: underline; text-underline-offset: 3px; }
.build u { color: #a0a0a6; text-underline-offset: 3px; }

.main { padding: 26px 0 0 28px; }
h1 { margin: 0; font-size: 24px; letter-spacing: .19px; line-height: 34px; font-weight: 700; }
p { margin: 0; color: #96959b; }
.req { margin-top: 27px; line-height: 20px; letter-spacing: .11px; }
.label { margin-top: 30px; line-height: 20px; font-weight: 500; letter-spacing: .1px; }
.desc { margin-top: 7px; line-height: 20px; letter-spacing: .07px; }
.select { position: relative; width: 855px; height: 38px; margin-top: 9px; border: 2px solid #4abffb; border-radius: 6px; background: #323137; box-shadow: 0 0 0 5px #294253; display: flex; align-items: center; justify-content: space-between; padding: 0 11px 0 8px; font-size: 14px; color: #f2f2f2; }
.select svg { width: 13px; height: 8px; color: #fff; }
.menu { position: absolute; left: -1px; top: 35px; width: 853px; height: 107px; padding: 4px 3px; background: #404040; border-radius: 6px; border-top: 1px solid #292929; }
.opt { height: 25px; line-height: 25px; padding-left: 6px; }
.opt.sel { background: #5b5b5b; border-radius: 4px; margin-top: -1px; margin-bottom: 1px; }
```
